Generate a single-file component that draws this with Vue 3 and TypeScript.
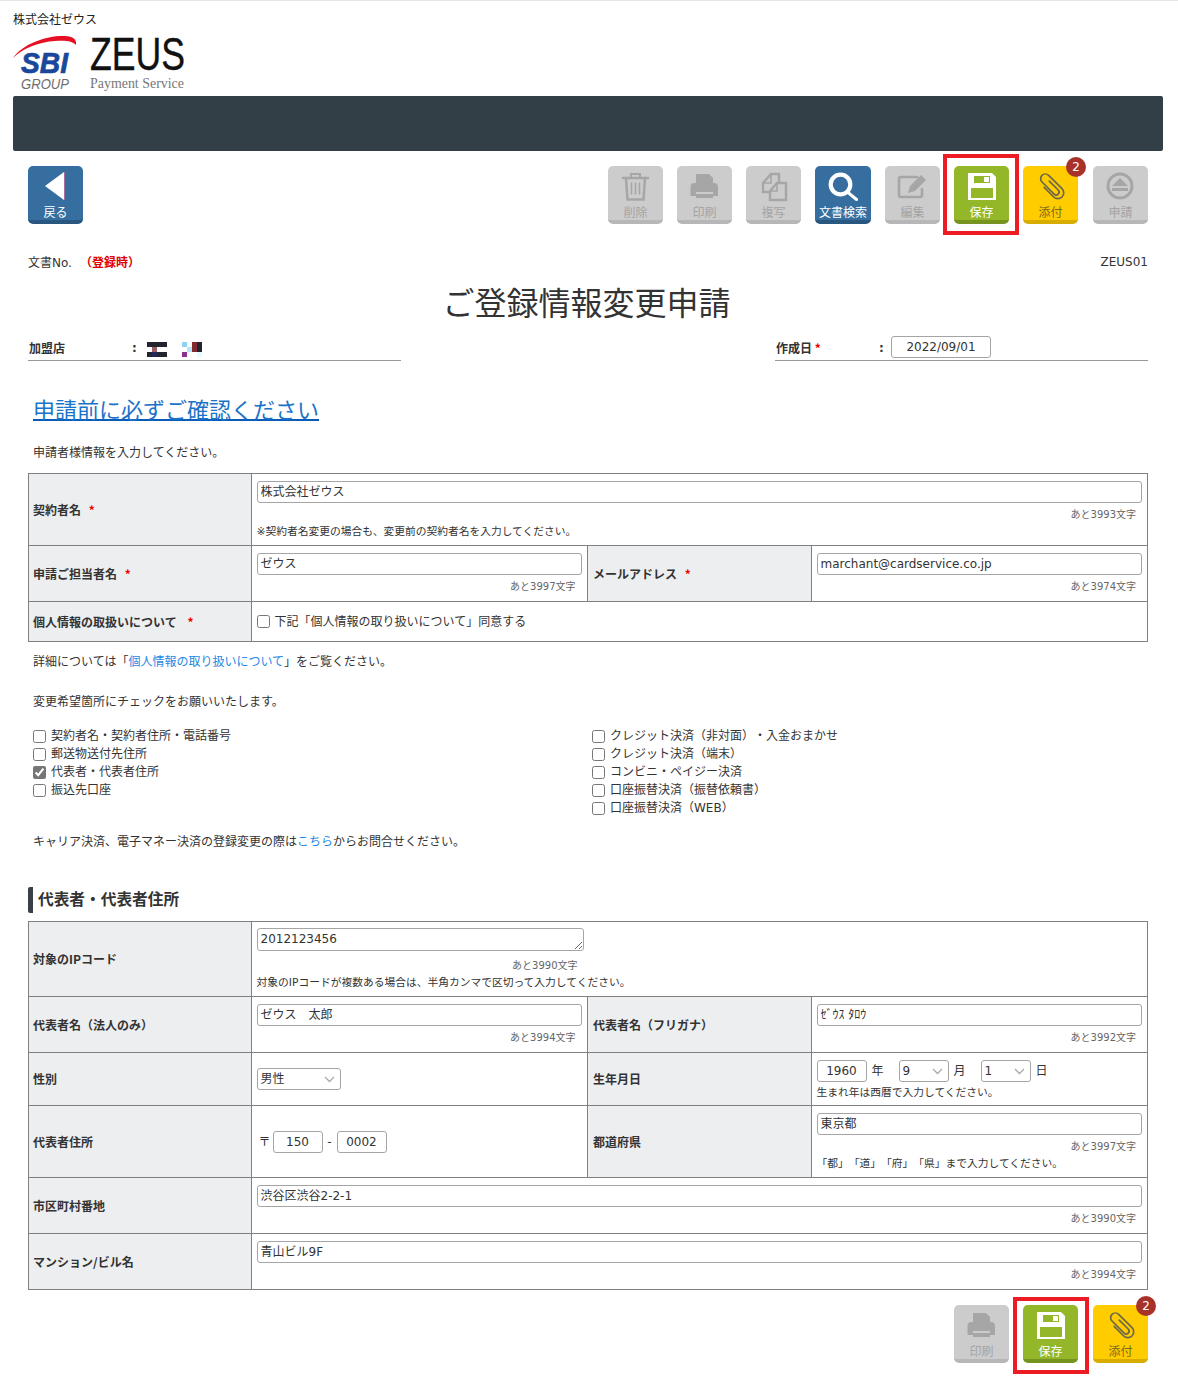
<script setup lang="ts">
interface Shape { d: string; fill?: string; stroke?: string; sw?: number; transform?: string }
interface Btn { label: string; tone: string; icon: string; badge?: string; outlined?: boolean }

const G = '#a6a6a6'
const BG = '#cccccc'
const GR = '#94b729'
const CLIP = '#6b6748'

const icons: Record<string, Shape[]> = {
  back: [
    { d: 'M17 20L36 6V34Z', fill: '#ffffff' },
    { d: 'M36.5 6V34', stroke: '#a96c9c', sw: 1 },
  ],
  trash: [
    { d: 'M15 12H40', stroke: G, sw: 2.5 },
    { d: 'M23 12V8H32V12', stroke: G, sw: 2 },
    { d: 'M18 12L19.5 33.5H35.5L37 12', stroke: G, sw: 2.5 },
    { d: 'M23.5 17V28M27.5 17V28M31.5 17V28', stroke: G, sw: 1.6 },
  ],
  print: [
    { d: 'M19 8H32L36 12V18H19Z', fill: G },
    { d: 'M13.5 21a4 4 0 0 1 4-4H37a4 4 0 0 1 4 4V30H36V26H19V30H13.5Z', fill: G },
    { d: 'M19 28H36V32H19Z', fill: G },
  ],
  copy: [
    { d: 'M17 17L25 8H33V26H17Z', stroke: G, sw: 2.4, fill: BG },
    { d: 'M17 17H25V8', stroke: G, sw: 1.6 },
    { d: 'M24 25L31 17H40V34H24Z', stroke: G, sw: 2.4, fill: BG },
    { d: 'M24 25H31V17', stroke: G, sw: 1.6 },
  ],
  search: [
    { d: 'M15.700 18.500a9.800 9.800 0 1 0 19.600 0a9.800 9.800 0 1 0-19.600 0', stroke: '#ffffff', sw: 4.2 },
    { d: 'M33 26.500L41.500 33.500', stroke: '#ffffff', sw: 3 },
  ],
  edit: [
    { d: 'M37 23V29a2 2 0 0 1-2 2H16a2 2 0 0 1-2-2V13a2 2 0 0 1 2-2H32', stroke: G, sw: 2.6 },
    { d: 'M23 27L25 20L36 9L41 14L30 25Z', fill: G },
  ],
  save: [
    { d: 'M14 7H38L42 11V34H14Z', fill: '#ffffff' },
    { d: 'M20 10H36V17H20Z', fill: GR },
    { d: 'M30 11H35V16H30Z', fill: '#ffffff' },
    { d: 'M17 22H39V32H17Z', fill: GR },
  ],
  clip: [
    {
      d: 'M2.500 -6V8a3.200 3.200 0 0 1-6.400 0V-11a5.200 5.200 0 0 1 10.400 0V10a6.500 6.500 0 0 1-13 0V-5',
      stroke: CLIP,
      sw: 1.9,
      transform: 'translate(28.500 20.500) rotate(-45) scale(.9)',
    },
  ],
  eject: [
    { d: 'M15 20a12 12 0 1 0 24 0a12 12 0 1 0-24 0', stroke: G, sw: 3 },
    { d: 'M27 12L35 20H19Z', fill: G },
    { d: 'M19 22H35V25H19Z', fill: G },
  ],
}

const topButtons: Btn[] = [
  { label: '削除', tone: 'off', icon: 'trash' },
  { label: '印刷', tone: 'off', icon: 'print' },
  { label: '複写', tone: 'off', icon: 'copy' },
  { label: '文書検索', tone: 'blue wide', icon: 'search' },
  { label: '編集', tone: 'off', icon: 'edit' },
  { label: '保存', tone: 'green', icon: 'save', outlined: true },
  { label: '添付', tone: 'yellow', icon: 'clip', badge: '2' },
  { label: '申請', tone: 'off shift', icon: 'eject' },
]
const bottomButtons: Btn[] = [
  { label: '印刷', tone: 'off', icon: 'print' },
  { label: '保存', tone: 'green low', icon: 'save', outlined: true },
  { label: '添付', tone: 'yellow shift', icon: 'clip', badge: '2' },
]
const backButton: Btn = { label: '戻る', tone: 'blue', icon: 'back' }

const leftChecks = [
  { label: '契約者名・契約者住所・電話番号', on: false },
  { label: '郵送物送付先住所', on: false },
  { label: '代表者・代表者住所', on: true },
  { label: '振込先口座', on: false },
]
const rightChecks = [
  'クレジット決済（非対面）・入金おまかせ',
  'クレジット決済（端末）',
  'コンビニ・ペイジー決済',
  '口座振替決済（振替依頼書）',
  '口座振替決済（WEB）',
]
const mosaic = [
  { x: 0, y: 0, w: 20, h: 5, c: '#22252e' },
  { x: 5, y: 5, w: 5, h: 5, c: '#9c5f66' },
  { x: 0, y: 10, w: 20, h: 5, c: '#22252e' },
  { x: 5, y: 10, w: 5, h: 5, c: '#22285c' },
  { x: 35, y: 0, w: 5, h: 5, c: '#8fd3f5' },
  { x: 40, y: 5, w: 5, h: 5, c: '#b6e6f8' },
  { x: 45, y: 0, w: 5, h: 10, c: '#832a2e' },
  { x: 50, y: 0, w: 5, h: 10, c: '#22252e' },
  { x: 35, y: 10, w: 5, h: 5, c: '#8c2f91' },
  { x: 50, y: 10, w: 5, h: 5, c: '#e6fbff' },
]
</script>

<template>
  <div class="page">
    <header class="head">
      <div class="company">株式会社ゼウス</div>
      <svg class="logo" width="180" height="62" viewBox="0 0 180 62">
        <path d="M0 25C10 10 36 2 52 3C60 3.500 64 6 63 12C60 8 52 7 42 8C26 9 10 15 0 25Z" fill="#e60f23" />
        <text x="8" y="40" class="sbi" textLength="47" lengthAdjust="spacingAndGlyphs">SBI</text>
        <text x="8" y="56" class="group" textLength="48" lengthAdjust="spacingAndGlyphs">GROUP</text>
        <text x="77" y="37" class="zeus" textLength="95" lengthAdjust="spacingAndGlyphs">ZEUS</text>
        <text x="77" y="55" class="pay" textLength="94" lengthAdjust="spacingAndGlyphs">Payment Service</text>
      </svg>
    </header>
    <div class="bar"></div>

    <main class="content">
      <div class="toolbar">
        <button class="tool" :class="backButton.tone" type="button">
          <svg class="ico" width="55" height="40" viewBox="0 0 55 40">
            <path v-for="(s, i) in icons[backButton.icon]" :key="i" :d="s.d" :fill="s.fill || 'none'" :stroke="s.stroke" :stroke-width="s.sw" />
          </svg>
          <span class="tool-label">{{ backButton.label }}</span>
        </button>
        <div class="tools">
          <button v-for="b in topButtons" :key="b.label" class="tool" :class="b.tone" type="button">
            <svg class="ico" width="55" height="40" viewBox="0 0 55 40">
              <path v-for="(s, i) in icons[b.icon]" :key="i" :d="s.d" :fill="s.fill || 'none'" :stroke="s.stroke" :stroke-width="s.sw" :transform="s.transform" stroke-linecap="round" />
            </svg>
            <span class="tool-label">{{ b.label }}</span>
            <span v-if="b.badge" class="badge">{{ b.badge }}</span>
            <span v-if="b.outlined" class="mark"></span>
          </button>
        </div>
      </div>

      <div class="docrow">
        <div>文書No.<span class="reg">（登録時）</span></div>
        <div>ZEUS01</div>
      </div>
      <h1 class="title">ご登録情報変更申請</h1>

      <div class="meta">
        <div class="meta-item">
          <span class="meta-label">加盟店</span>
          <span class="colon">:</span>
          <svg class="mosaic" width="55" height="15" viewBox="0 0 55 15">
            <rect v-for="(m, i) in mosaic" :key="i" :x="m.x" :y="m.y" :width="m.w" :height="m.h" :fill="m.c" />
          </svg>
        </div>
        <div class="meta-item">
          <span class="meta-label">作成日 <i class="req">*</i></span>
          <span class="colon">:</span>
          <input class="field date" value="2022/09/01" />
        </div>
      </div>

      <a class="biglink" href="#">申請前に必ずご確認ください</a>
      <p class="intro">申請者様情報を入力してください。</p>

      <table class="form">
        <colgroup><col class="c1" /><col class="c2" /><col class="c3" /><col class="c4" /></colgroup>
        <tbody>
          <tr class="h72">
            <th>契約者名 <i class="req sp">*</i></th>
            <td colspan="3">
              <input class="field full jp" value="株式会社ゼウス" />
              <div class="count">あと3993文字</div>
              <div class="note">※契約者名変更の場合も、変更前の契約者名を入力してください。</div>
            </td>
          </tr>
          <tr class="h56">
            <th>申請ご担当者名 <i class="req sp">*</i></th>
            <td>
              <input class="field full jp" value="ゼウス" />
              <div class="count">あと3997文字</div>
            </td>
            <th>メールアドレス <i class="req sp">*</i></th>
            <td>
              <input class="field full" value="marchant@cardservice.co.jp" />
              <div class="count">あと3974文字</div>
            </td>
          </tr>
          <tr class="h40">
            <th>個人情報の取扱いについて <i class="req sp2">*</i></th>
            <td colspan="3" class="mid">
              <label class="check"><input type="checkbox" />下記「個人情報の取り扱いについて」同意する</label>
            </td>
          </tr>
        </tbody>
      </table>

      <p class="p1">詳細については「<a class="inline" href="#">個人情報の取り扱いについて</a>」をご覧ください。</p>
      <p class="p2">変更希望箇所にチェックをお願いいたします。</p>

      <div class="checks">
        <div>
          <label v-for="c in leftChecks" :key="c.label" class="check row"><input type="checkbox" :checked="c.on" />{{ c.label }}</label>
        </div>
        <div>
          <label v-for="c in rightChecks" :key="c" class="check row"><input type="checkbox" />{{ c }}</label>
        </div>
      </div>

      <p class="p3">キャリア決済、電子マネー決済の登録変更の際は<a class="inline" href="#">こちら</a>からお問合せください。</p>

      <h2 class="section">代表者・代表者住所</h2>

      <table class="form">
        <colgroup><col class="c1" /><col class="c2" /><col class="c3" /><col class="c4" /></colgroup>
        <tbody>
          <tr class="h75">
            <th>対象のIPコード</th>
            <td colspan="3" class="tight">
              <div class="areawrap">
                <textarea class="field area">2012123456</textarea>
                <div class="count a">あと3990文字</div>
              </div>
              <div class="note b">対象のIPコードが複数ある場合は、半角カンマで区切って入力してください。</div>
            </td>
          </tr>
          <tr class="h56">
            <th>代表者名（法人のみ）</th>
            <td>
              <input class="field full jp" value="ゼウス　太郎" />
              <div class="count">あと3994文字</div>
            </td>
            <th>代表者名（フリガナ）</th>
            <td>
              <input class="field full jp" value="ｾﾞｳｽ ﾀﾛｳ" />
              <div class="count">あと3992文字</div>
            </td>
          </tr>
          <tr class="h53">
            <th>性別</th>
            <td class="mid">
              <span class="selwrap">
                <select class="field sel gender"><option>男性</option></select>
                <svg class="chev" width="11" height="7" viewBox="0 0 11 7"><path d="M1 1L5.500 5.500L10 1" fill="none" stroke="#a9a9a9" stroke-width="1.300" /></svg>
              </span>
            </td>
            <th>生年月日</th>
            <td class="tall">
              <div class="inline-row">
                <input class="field year" value="1960" />
                <span class="u1">年</span>
                <span class="selwrap">
                  <select class="field sel"><option>9</option></select>
                  <svg class="chev" width="11" height="7" viewBox="0 0 11 7"><path d="M1 1L5.500 5.500L10 1" fill="none" stroke="#a9a9a9" stroke-width="1.300" /></svg>
                </span>
                <span class="u2">月</span>
                <span class="selwrap">
                  <select class="field sel"><option>1</option></select>
                  <svg class="chev" width="11" height="7" viewBox="0 0 11 7"><path d="M1 1L5.500 5.500L10 1" fill="none" stroke="#a9a9a9" stroke-width="1.300" /></svg>
                </span>
                <span class="u3">日</span>
              </div>
              <div class="note c">生まれ年は西暦で入力してください。</div>
            </td>
          </tr>
          <tr class="h72">
            <th>代表者住所</th>
            <td class="mid">
              <div class="inline-row zip">
                <span class="z0">〒</span>
                <input class="field year" value="150" />
                <span class="z1">-</span>
                <input class="field year" value="0002" />
              </div>
            </td>
            <th>都道府県</th>
            <td>
              <input class="field full jp" value="東京都" />
              <div class="count">あと3997文字</div>
              <div class="note d">「都」「道」「府」「県」まで入力してください。</div>
            </td>
          </tr>
          <tr class="h56">
            <th>市区町村番地</th>
            <td colspan="3">
              <input class="field full jp" value="渋谷区渋谷2-2-1" />
              <div class="count">あと3990文字</div>
            </td>
          </tr>
          <tr class="h56">
            <th>マンション/ビル名</th>
            <td colspan="3">
              <input class="field full jp" value="青山ビル9F" />
              <div class="count">あと3994文字</div>
            </td>
          </tr>
        </tbody>
      </table>

      <div class="tools foot">
        <button v-for="b in bottomButtons" :key="b.label" class="tool" :class="b.tone" type="button">
          <svg class="ico" width="55" height="40" viewBox="0 0 55 40">
            <path v-for="(s, i) in icons[b.icon]" :key="i" :d="s.d" :fill="s.fill || 'none'" :stroke="s.stroke" :stroke-width="s.sw" :transform="s.transform" stroke-linecap="round" />
          </svg>
          <span class="tool-label">{{ b.label }}</span>
          <span v-if="b.badge" class="badge">{{ b.badge }}</span>
          <span v-if="b.outlined" class="mark"></span>
        </button>
      </div>
    </main>
  </div>
</template>

<style>
html, body { background: #ffffff; }
</style>

<style scoped>
.page {
  width: 1150px;
  margin-left: 13px;
  padding-bottom: 30px;
  font: 12px/18px "DejaVu Sans", "Noto Sans CJK JP", sans-serif;
  color: #333333;
  position: relative;
  text-spacing-trim: space-all;
}
.page::before {
  content: "";
  position: absolute;
  left: -13px;
  top: 0;
  width: 1178px;
  height: 1px;
  background: #e5e5e5;
}
.head { padding-top: 10px; height: 96px; box-sizing: border-box; }
.company { color: #222; font-family: "Noto Sans CJK JP", sans-serif; line-height: 18px; }
.logo { display: block; margin-top: 5px; overflow: visible; }
.sbi { font: italic 700 30px "Liberation Sans", sans-serif; fill: #19479b; stroke: #19479b; stroke-width: 0.7px; }
.group { font: italic 400 14px "Liberation Sans", sans-serif; fill: #6d6d6d; }
.zeus { font: 400 46px "Liberation Sans", sans-serif; fill: #111; stroke: #111; stroke-width: 0.4px; }
.pay { font: 400 14px "Liberation Serif", serif; fill: #777; }
.bar { height: 55px; background: #323f47; border-radius: 2px; }
.content { padding: 15px 15px 0; }
.toolbar { display: flex; justify-content: space-between; align-items: flex-start; }
.tools { display: flex; gap: 14px; }
.tool {
  position: relative;
  display: block;
  width: 55px;
  height: 58px;
  padding: 0;
  border: 0;
  border-bottom: 4px solid;
  border-radius: 5px;
  box-sizing: border-box;
  font: inherit;
  text-align: center;
}
.ico { position: absolute; left: 0; top: 0; }
.tool-label {
  position: absolute;
  left: -2px;
  right: -2px;
  top: 37px;
  font: 12px/18px "Noto Sans CJK JP", sans-serif;
}
.off { background: #cccccc; border-color: #b7b7b7; color: #a4a4a4; }
.blue { background: #366f9f; border-color: #29577f; color: #ffffff; }
.green { background: #94b729; border-color: #76921f; color: #ffffff; }
.yellow { background: #ffcc00; border-color: #d8ad00; color: #75691f; }
.wide { width: 56px; }
.shift { margin-left: 1px; }
.badge {
  position: absolute;
  right: -8px;
  top: -9px;
  width: 20px;
  height: 20px;
  border-radius: 50%;
  background: #a8322a;
  color: #ffffff;
  font: 400 12px/20px "DejaVu Sans", sans-serif;
}
.mark {
  position: absolute;
  left: -11px;
  right: -10px;
  top: -12px;
  bottom: -15px;
  border: 4px solid #ed1c24;
  pointer-events: none;
}
.low .mark { left: -10px; right: -11px; top: -8px; bottom: -15px; }
.docrow { display: flex; justify-content: space-between; margin-top: 29px; }
.reg { margin-left: 8px; color: #e00000; font-weight: 700; font-family: "Noto Sans CJK JP", sans-serif; }
.title {
  margin: 7px 0 0;
  padding-right: 3px;
  font: 400 32px/44px "Noto Sans CJK JP", sans-serif;
  text-align: center;
  color: #333;
}
.meta { display: flex; justify-content: space-between; margin-top: 12px; }
.meta-item {
  width: 373px;
  height: 26px;
  box-sizing: border-box;
  border-bottom: 1px solid #999999;
  display: flex;
  align-items: center;
}
.meta-label { width: 104px; padding-left: 1px; box-sizing: border-box; font-weight: 700; font-family: "Noto Sans CJK JP", sans-serif; }
.colon { width: 8px; font-weight: 700; }
.mosaic { margin: 3px 0 0 7px; }
.req { color: #ee0000; font-style: normal; font-weight: 700; }
.sp { margin-left: 5px; }
.sp2 { margin-left: 8px; }
.field {
  box-sizing: border-box;
  height: 22px;
  border: 1px solid #a5a5a5;
  border-radius: 3px;
  padding: 0 3px;
  font: inherit;
  color: #333;
  background: #fff;
  outline: none;
}
.date { width: 100px; height: 22px; margin-left: 4px; margin-top: -2px; text-align: center; }
.full { display: block; width: 100%; }
.jp { padding-bottom: 3px; }
.biglink {
  display: block;
  width: max-content;
  margin: 32px 0 0 5px;
  font: 400 22px/30px "Noto Sans CJK JP", sans-serif;
  color: #1a73c9;
  text-decoration: underline;
  text-decoration-color: #0a5cb8;
  text-decoration-thickness: 2px;
}
.intro { margin: 21px 0 11px 5px; }
.form {
  width: 1119px;
  table-layout: fixed;
  border-collapse: collapse;
}
.c1 { width: 222.5px; }
.c2 { width: 336px; }
.c3 { width: 224px; }
.c4 { width: 336.5px; }
.form th, .form td { border: 1px solid #808080; padding: 0 5px; }
.form th {
  padding-left: 4px;
  background: #eceef0;
  text-align: left;
  font-family: "Noto Sans CJK JP", sans-serif;
  font-weight: 700;
  vertical-align: middle;
}
.form td + th { padding-left: 5.5px; }
.form td { vertical-align: top; padding-top: 7px; }
.form td.mid { vertical-align: middle; padding-top: 0; }
.form td.tight { padding-top: 6px; }
.h72 { height: 72px; }
.h56 { height: 56px; }
.h40 { height: 40px; }
.h75 { height: 75px; }
.h53 { height: 53px; }
.count { text-align: right; padding-right: 6px; margin-top: 5px; font-size: 10px; line-height: 14px; color: #666; }
.note { margin-top: 1px; font-size: 10.75px; line-height: 18px; }
.note.b { margin-top: 1px; }
.note.c { margin-top: 2px; }
.note.d { margin-top: 1px; }
.areawrap { width: 327px; }
.area { display: block; width: 100%; height: 23px; padding-top: 1px; resize: vertical; }
.count.a { margin-top: 8px; }
.check { display: flex; align-items: center; }
.check input { width: 13px; height: 13px; margin: 0 5px 0 0; accent-color: #767676; }
.row { height: 18px; }
.p1 { margin: 11px 0 0 5px; }
.p2 { margin: 22px 0 0 5px; }
.p3 { margin: 16px 0 0 5px; }
.inline { color: #1e88e5; text-decoration: none; }
.checks { display: grid; grid-template-columns: 559px 1fr; margin: 16px 0 0 5px; }
.section {
  margin: 36px 0 8px;
  height: 26px;
  border-left: 5px solid #3a4046;
  border-radius: 2px;
  padding-left: 5px;
  font: 700 15.7px/24px "Noto Sans CJK JP", sans-serif;
  color: #333;
}
.inline-row { display: flex; align-items: center; }
.year { width: 50px; text-align: center; }
.selwrap { position: relative; display: inline-block; height: 22px; }
.sel { display: block; appearance: none; padding: 0 0 0 3px; width: 50px; }
.gender { width: 84px; }
.chev { position: absolute; right: 6px; top: 8px; pointer-events: none; }
.u1 { margin: 0 15px 0 5px; }
.u2 { margin: 0 15px 0 5px; }
.u3 { margin-left: 5px; }
.z0 { width: 16px; padding-left: 2px; box-sizing: border-box; }
.z1 { width: 14px; text-align: center; }
.foot { justify-content: flex-end; margin-top: 15px; }
</style>
